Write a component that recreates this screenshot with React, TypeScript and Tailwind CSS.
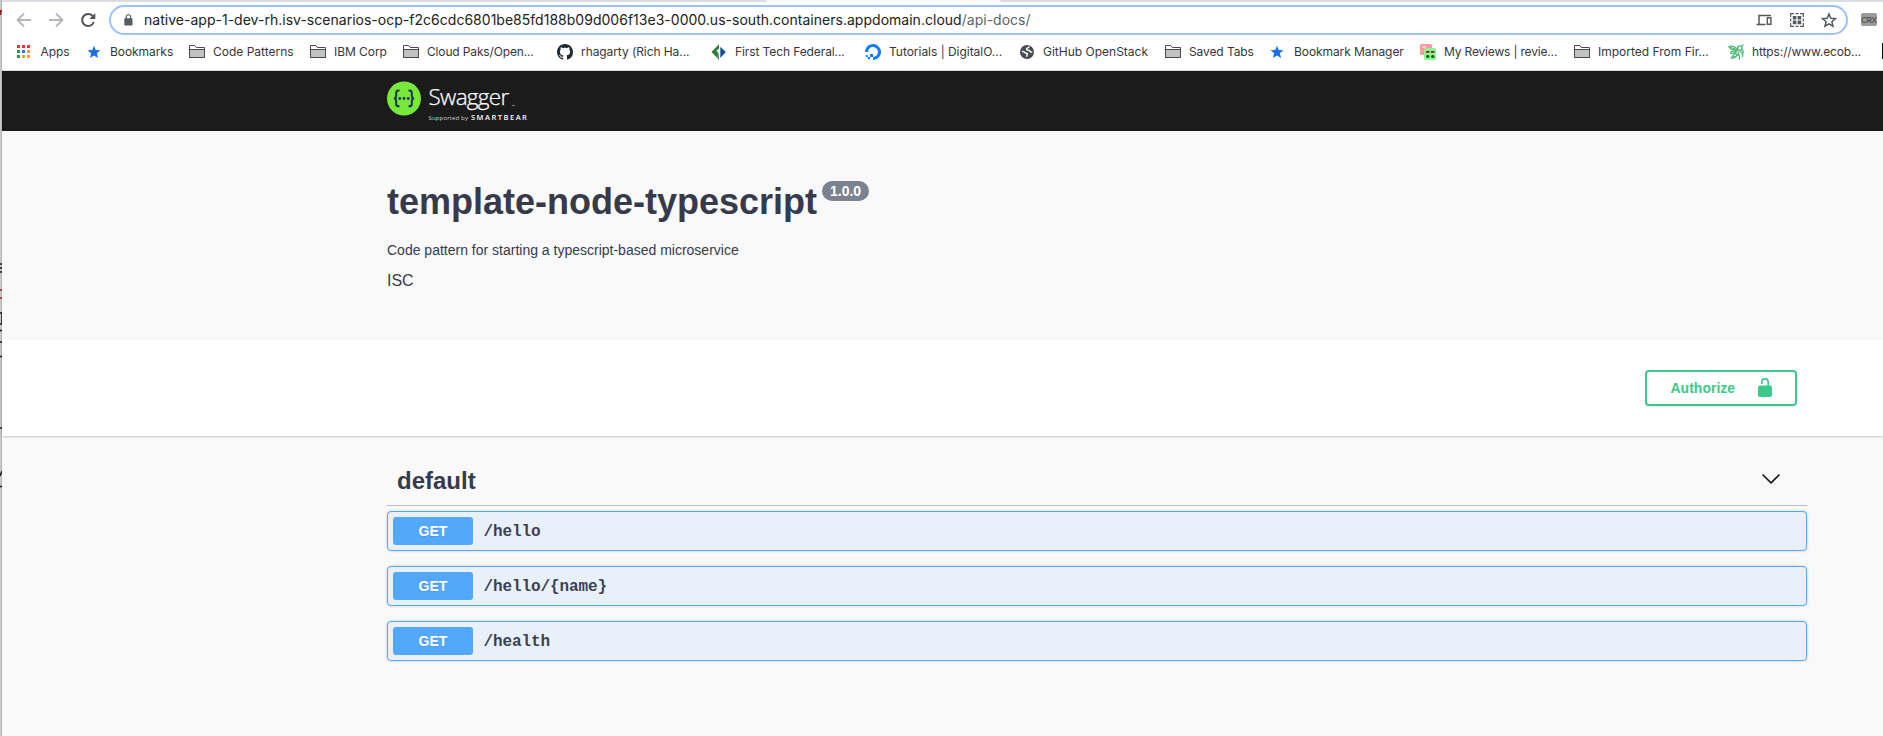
import type { ReactNode } from 'react';

const Folder = () => (
  <svg width="16" height="16" viewBox="0 0 16 16">
    <path d="M.5 13.500V1.500h5.200l1.600 2h8.200v10z" fill="#fff" stroke="#4a4a4a" />
    <path d="M1 6h14v7H1z" fill="#c2c2c2" />
    <path d="M.5 5.500h15v8H.5z" fill="none" stroke="#4a4a4a" />
  </svg>
);

const BlueStar = () => (
  <svg width="16" height="16" viewBox="0 0 16 16">
    <path d="M7 1.800l1.700 4.300 4.800.2-3.700 3 1.300 4.700L7 11.400 2.900 14l1.300-4.700-3.700-3 4.800-.2z" fill="#1a6fe8" />
  </svg>
);

const AppsGrid = () => (
  <svg width="16" height="16" viewBox="0 0 16 16">
    <path d="M0 1h3v3H0zM5 1h3v3H5zM10 1h3v3h-3z" fill="#ea3340" />
    <path d="M0 6h3v3H0zM0 11h3v3H0z" fill="#2d9a50" />
    <path d="M5 6h3v3H5z" fill="#2b7de9" />
    <path d="M10 6h3v3h-3zM5 11h3v3H5zM10 11h3v3h-3z" fill="#f6a11f" />
  </svg>
);

const GitHub = () => (
  <svg width="16" height="16" viewBox="0 0 16 16">
    <path
      fill="#24292e"
      d="M8 0C3.58 0 0 3.58 0 8c0 3.54 2.29 6.53 5.47 7.59.4.07.55-.17.55-.38 0-.19-.01-.82-.01-1.49-2.01.37-2.53-.49-2.69-.94-.09-.23-.48-.94-.82-1.13-.28-.15-.68-.52-.01-.53.63-.01 1.08.58 1.23.82.72 1.21 1.87.87 2.33.66.07-.52.28-.87.51-1.07-1.78-.2-3.64-.89-3.64-3.95 0-.87.31-1.59.82-2.15-.08-.2-.36-1.02.08-2.12 0 0 .67-.21 2.2.82.64-.18 1.32-.27 2-.27s1.36.09 2 .27c1.53-1.04 2.2-.82 2.2-.82.44 1.1.16 1.92.08 2.12.51.56.82 1.27.82 2.15 0 3.07-1.87 3.75-3.65 3.95.29.25.54.73.54 1.48 0 1.07-.01 1.93-.01 2.2 0 .21.15.46.55.38A8.01 8.01 0 0 0 16 8c0-4.42-3.58-8-8-8z"
    />
  </svg>
);

const FirstTech = () => (
  <svg width="16" height="16" viewBox="0 0 16 16">
    <path d="M8 .3v15.400L.5 8z" fill="#2e7a35" />
    <path d="M8 .3L15.500 8 8 15.700z" fill="#fff" />
    <path d="M5.500 6.500L8 4.500v9.500H6.800V7.500H5.500z" fill="#e9f1e9" />
    <path d="M7.300 9.500H8v6.200l-.7-.7z" fill="#2e7a35" />
    <path d="M9.300 2.800L14.800 8l-5.500 6z" fill="#134d9c" />
  </svg>
);

const DigitalOcean = () => (
  <svg width="16" height="16" viewBox="0 0 16 16">
    <path d="M8 16v-3.1c3.3 0 5.8-3.2 4.6-6.7A4.7 4.7 0 0 0 9.800 3.400C6.300 2.100 3.100 4.700 3.100 8H0C0 2.800 5.100-1.300 10.500.4c2.400.7 4.300 2.700 5.100 5.100C17.300 10.900 13.300 16 8 16z" fill="#0a80ff" />
    <path d="M5 9.900h3v3H5zM2.700 12.900H5v2.300H2.700zM.8 11h1.900v1.900H.8z" fill="#0a80ff" />
  </svg>
);

const Globe = () => (
  <svg width="16" height="16" viewBox="0 0 16 16">
    <circle cx="8" cy="8" r="7" fill="#484b50" />
    <path d="M3 7.200c1.500.2 2.600.7 3.500 1.700.5.500 1.600.3 1.900 1 .2.800-.8 1.300-.7 2.900" fill="none" stroke="#fff" strokeWidth="1.500" />
    <path d="M10.200 2.200C10.300 4 8 3.700 7.600 4.800c-.3 1 .7 1.600 1.800 1.500 1.400-.1 1.500 1.300 2.200 1.700.6.300 1.200.1 1.700 0" fill="none" stroke="#fff" strokeWidth="1.400" />
  </svg>
);

const Reviews = () => (
  <svg width="16" height="16" viewBox="0 0 16 16">
    <rect width="12" height="11" rx="1.500" fill="#fa9a9e" />
    <path d="M2 2h4v2H2z" fill="#fcc9cb" />
    <rect x="4" y="4" width="12" height="12" rx="1.500" fill="#8dfa93" />
    <path d="M6 7h3.500v1.700H6zM11 7h3.500v1.700H11z" fill="#a31111" />
    <path d="M6 12l1-1h1.500l1 1v1l-1 1H7l-1-1zM11 12l1-1h1.500l1 1v1l-1 1H12l-1-1z" fill="#0b6b18" />
  </svg>
);

const Bee = () => (
  <svg width="16" height="16" viewBox="0 0 16 16" fill="none" stroke="#4cbb78" strokeWidth="1.300" strokeLinecap="round">
    <path d="M9.500 5.500C7 2 3 1.500.800 2.800c1 2 3.700 3.200 7.500 3.600" />
    <path d="M2.500 3.500l5 1.700M8 7C4.500 6.500 2 7.800 2.700 9c1.600 1 4-.3 5.500-1.700" />
    <path d="M9.500 6.500C7.500 9.500 4.500 11.500 3.200 14.200 6.500 14.300 9.500 12 11 8" />
    <path d="M6.800 9.500l2.700 1.400M5 12l2.300 1.200" />
    <circle cx="11.800" cy="4" r="2.200" />
    <path d="M13.500 2.300L15 1M12 7c2 1.400 3.200 3.600 2.500 5.500M10.500 10.500c1.200 1 1.200 3 .8 4.700M14 5.500c1.200 1 1.500 2 1.200 3.200" />
  </svg>
);

type Bookmark = { label: string; icon: ReactNode; width: string; tracking: string };

const bookmarks: Bookmark[] = [
  { label: 'Apps', icon: <AppsGrid />, width: 'w-[70px]', tracking: '-ml-[0.500px] tracking-[-0.100px]' },
  { label: 'Bookmarks', icon: <BlueStar />, width: 'w-[102px]', tracking: '-ml-px tracking-[-0.060px]' },
  { label: 'Code Patterns', icon: <Folder />, width: 'w-[121px]', tracking: 'tracking-normal' },
  { label: 'IBM Corp', icon: <Folder />, width: 'w-[93px]', tracking: 'tracking-[-0.050px]' },
  { label: 'Cloud Paks/Open...', icon: <Folder />, width: 'w-[154px]', tracking: 'tracking-[-0.150px]' },
  { label: 'rhagarty (Rich Ha...', icon: <GitHub />, width: 'w-[154px]', tracking: 'tracking-[-0.080px]' },
  { label: 'First Tech Federal...', icon: <FirstTech />, width: 'w-[154px]', tracking: 'tracking-[-0.100px]' },
  { label: 'Tutorials | DigitalO...', icon: <DigitalOcean />, width: 'w-[154px]', tracking: 'tracking-[-0.030px]' },
  { label: 'GitHub OpenStack', icon: <Globe />, width: 'w-[146px]', tracking: 'tracking-normal' },
  { label: 'Saved Tabs', icon: <Folder />, width: 'w-[105px]', tracking: 'tracking-[-0.100px]' },
  { label: 'Bookmark Manager', icon: <BlueStar />, width: 'w-[150px]', tracking: 'tracking-[-0.080px]' },
  { label: 'My Reviews | revie...', icon: <Reviews />, width: 'w-[154px]', tracking: 'tracking-[-0.170px]' },
  { label: 'Imported From Fir...', icon: <Folder />, width: 'w-[154px]', tracking: 'tracking-normal' },
  { label: 'https://www.ecob...', icon: <Bee />, width: 'w-[154px]', tracking: 'tracking-[-0.110px]' },
];

function AddressRow() {
  return (
    <div className="flex h-[33px] items-start pt-[3px]">
      <div className="flex h-[30px] w-[107px] shrink-0 items-center">
        <svg width="107" height="30" viewBox="0 0 107 30" fill="none">
          <path d="M29 15H16M22 8.500L15.500 15l6.500 6.500" stroke="#b4b6b8" strokeWidth="1.800" />
          <path d="M47 15h13M54 8.500l6.500 6.500-6.500 6.500" stroke="#b4b6b8" strokeWidth="1.800" />
          <path d="M91 11.500A6 6 0 1 0 91.800 17" stroke="#505357" strokeWidth="2" />
          <path d="M93.300 8v6h-6z" fill="#505357" />
        </svg>
      </div>
      <div className="flex h-[30px] w-[1739px] shrink-0 items-center rounded-full border-2 border-[#9ec0fb] bg-white">
        <svg className="ml-[13px] shrink-0" width="9" height="12" viewBox="0 0 9 12">
          <path d="M2.200 5V3a2.200 2.200 0 0 1 4.500 0v2" fill="none" stroke="#5a5d61" strokeWidth="1.200" />
          <rect x="0.300" y="4.300" width="8.200" height="7.200" rx="0.800" fill="#5a5d61" />
        </svg>
        <div className="ml-[11px] grow whitespace-nowrap text-[14px] leading-5 tracking-[0.018px] text-[#202124]">
          <span>native-app-1-dev-rh.isv-scenarios-ocp-f2c6cdc6801be85fd188b09d006f13e3-0000.us-south.containers.appdomain.cloud</span>
          <span className="text-[#5f6368]">/api-docs/</span>
        </div>
        <svg className="mr-[6px] shrink-0" width="84" height="18" viewBox="0 0 84 18" fill="none" stroke="#55585c">
          <path d="M3 13V4.500h12M.5 13.500h9" strokeWidth="1.500" />
          <path d="M11.300 6.700h3.600v6.500h-3.600z" strokeWidth="1.400" />
          <path d="M34.700 6V2.700H38M44 2.700h3.300V6M47.300 12v3.300H44M38 15.300h-3.300V12M39.500 2.700h3M39.500 15.300h3M34.700 7.500v3M47.300 7.500v3" strokeWidth="1.200" />
          <path d="M36.800 4.900h3.600v3.600h-3.600zM41.600 4.900h3.600v3.600h-3.600zM36.800 9.600h3.600v3.600h-3.600zM41.600 9.600h3.600v3.600h-3.600z" fill="#55585c" stroke="none" />
          <path d="M73 3l1.800 4.300 4.600.4-3.500 3 1.100 4.500-4-2.400-4 2.400 1.100-4.500-3.500-3 4.600-.4z" strokeWidth="1.500" />
        </svg>
      </div>
      <div className="mt-2 ml-[13px] flex h-[13px] w-4 items-center justify-center rounded-[2px] bg-[#9b9b9b] text-[8px] leading-none tracking-[-0.300px] text-[#3f3f3f]">
        CRX
      </div>
    </div>
  );
}

function BookmarksBar() {
  return (
    <div className="flex h-[34px] items-start overflow-hidden pl-[15px]">
      {bookmarks.map((b) => (
        <div key={b.label} className={`flex h-[33px] shrink-0 items-center gap-2 ${b.width}`}>
          <span className="w-4 shrink-0">{b.icon}</span>
          <span className={`whitespace-nowrap text-[12px] leading-4 text-[#34373b] ${b.tracking}`}>{b.label}</span>
        </div>
      ))}
      <div className="mt-2 h-4 w-1 shrink-0 bg-[#111]" />
    </div>
  );
}

function Logo() {
  return (
    <div className="flex items-start">
      <svg width="34" height="36" viewBox="0 0 34 36" fill="none">
        <circle cx="17" cy="17.500" r="17" fill="#78e83b" />
        <path d="M12.500 9.500h-1c-1.600 0-2.300.8-2.300 2.400v2.900c0 1.500-.7 2.400-2.200 2.600 1.500.2 2.200 1.100 2.200 2.600v2.900c0 1.600.7 2.400 2.300 2.400h1" stroke="#173647" strokeWidth="2" />
        <path d="M21.500 9.500h1c1.600 0 2.300.8 2.300 2.400v2.900c0 1.500.7 2.400 2.200 2.600-1.500.2-2.200 1.100-2.200 2.600v2.900c0 1.600-.7 2.400-2.300 2.400h-1" stroke="#173647" strokeWidth="2" />
        <circle cx="12.700" cy="17.500" r="1.400" fill="#173647" />
        <circle cx="17" cy="17.500" r="1.400" fill="#173647" />
        <circle cx="21.300" cy="17.500" r="1.400" fill="#173647" />
      </svg>
      <div className="ml-[7.500px] font-['Open_Sans',sans-serif] text-white">
        <div className="mt-[2px] flex h-[28px] items-end whitespace-nowrap text-[22.500px] leading-[28px] font-light tracking-[-0.700px] [-webkit-text-stroke:0.250px_white]">
          Swagger<span className="mb-[5px] ml-[3px] h-px w-[3px] bg-[#777]" />
        </div>
        <div className="flex items-baseline gap-[4px] whitespace-nowrap pt-px leading-[10px]">
          <span className="w-[38.500px] text-[6px] tracking-[0.150px] text-[#d0d0d0]">Supported by</span>
          <span className="text-[7.500px] font-semibold tracking-[1.500px]">SMARTBEAR</span>
        </div>
      </div>
    </div>
  );
}

function Operation({ path }: { path: string }) {
  return (
    <div className="flex h-10 items-center rounded-[4px] border border-[#57a8f8] bg-[#e8f0fa] pl-[5px] shadow-[0_0_3px_rgba(0,0,0,0.19)]">
      <span className="flex h-7 w-20 items-center justify-center rounded-[3px] bg-[#54a8fb] text-[14px] font-bold text-white [text-shadow:0_1px_0_rgba(0,0,0,0.1)]">
        GET
      </span>
      <span className="pt-[2px] pl-[10.500px] font-['Liberation_Mono',monospace] text-[16px] leading-5 font-bold tracking-[-0.100px] text-[#3b4151]">
        {path}
      </span>
    </div>
  );
}

export default function App() {
  return (
    <div className="flex h-[736px] w-[1883px] overflow-hidden bg-[#f9f9f9] font-['Liberation_Sans',Arial,sans-serif] text-[#363b4c]">
      <svg className="shrink-0" width="2" height="736" viewBox="0 0 2 736">
        <path d="M0 0h2v736H0z" fill="#c9c9c9" />
        <path d="M1.500 0v736" stroke="#b5b5b5" />
        <path d="M0 10h2l-1 5H0z" fill="#a00b18" />
        <path d="M0 264h2M0 268h2M0 272h2M0 313h2v11H0M0 330.500h2M0 342h2M0 356.500h2M0 428h2M0 476l2-5M0 486.500h2" stroke="#171717" strokeWidth="1.500" fill="none" />
        <path d="M0 290h2M0 298h2" stroke="#b5172a" strokeWidth="1.500" />
      </svg>
      <div className="flex w-[1881px] flex-col">
        <div className="border-b border-[#dadfdc] bg-white font-['Inter',sans-serif]">
          <div className="flex h-[2px]">
            <div className="w-[765px] rounded-br-[2px] bg-[#dadde1]" />
            <div className="w-[233px]" />
            <div className="grow rounded-bl-[2px] bg-[#dadde1]" />
          </div>
          <AddressRow />
          <BookmarksBar />
          <div className="h-px" />
        </div>
        <header className="h-[60px] bg-[#1b1b1b] pt-[10px] pl-[385px]">
          <Logo />
        </header>
        <section className="h-[209px] pt-[50px] pl-[385px]">
          <div className="flex items-start">
            <h1 className="whitespace-nowrap text-[36px] leading-[42px] font-bold">template-node-typescript</h1>
            <span className="ml-[5px] flex h-5 w-[47px] items-center justify-center rounded-full bg-[#7b8290] text-[14px] leading-5 font-bold text-white">
              1.0.0
            </span>
          </div>
          <p className="mt-[17px] text-[14px] leading-5">Code pattern for starting a typescript-based microservice</p>
          <p className="mt-[11px] text-[16px] leading-5">ISC</p>
        </section>
        <section className="flex h-24 shrink-0 justify-end bg-white pt-[30px] pr-[86px] shadow-[0_1px_2px_rgba(0,0,0,0.2)]">
          <button className="flex h-9 w-[152px] items-center rounded-[4px] border-2 border-[#3fc88b] pl-[23.500px] text-[14px] font-bold text-[#3fc88b] shadow-[0_1px_2px_rgba(0,0,0,0.1)]">
            Authorize
            <svg className="ml-[22.500px]" width="14" height="20" viewBox="0 0 14 20">
              <path d="M3.800 6V4a3.200 3.200 0 0 1 6.400 0v4" fill="none" stroke="#3fc88b" strokeWidth="1.700" />
              <rect x="0" y="7.500" width="14" height="11.500" rx="2" fill="#3fc88b" />
            </svg>
          </button>
        </section>
        <main className="w-[1805px] pt-[26px] pl-[385px]">
          <div className="flex h-11 items-start justify-between border-b border-[#bcbdc0] pr-[26px] pl-[10px]">
            <h2 className="pt-[5px] text-[24px] leading-7 font-bold">default</h2>
            <svg className="mt-[9.500px]" width="20" height="14" viewBox="0 0 20 14">
              <path d="M1.500 2.500l8.500 8.300 8.500-8.300" fill="none" stroke="#161616" strokeWidth="1.600" />
            </svg>
          </div>
          <div className="mt-[5px] flex flex-col gap-[15px]">
            <Operation path="/hello" />
            <Operation path="/hello/{name}" />
            <Operation path="/health" />
          </div>
        </main>
      </div>
    </div>
  );
}
